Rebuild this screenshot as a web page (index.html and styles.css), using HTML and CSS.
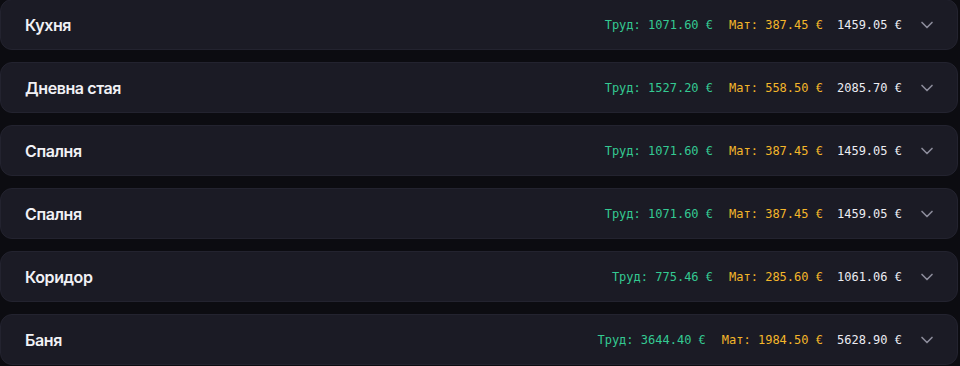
FILE: index.html
```html
<!DOCTYPE html>
<html lang="bg">
<head>
<meta charset="utf-8">
<link rel="stylesheet" href="styles.css">
</head>
<body>
<div class="list">
  <div class="room">
    <div class="room-name">Кухня</div>
    <div class="sums">
      <span class="labor">Труд: 1071.60 €</span>
      <span class="mat">Мат: 387.45 €</span>
      <span class="total">1459.05 €</span>
      <svg class="chev" viewBox="0 0 24 24"><path d="m6 9 6 6 6-6"/></svg>
    </div>
  </div>
  <div class="room">
    <div class="room-name">Дневна стая</div>
    <div class="sums">
      <span class="labor">Труд: 1527.20 €</span>
      <span class="mat">Мат: 558.50 €</span>
      <span class="total">2085.70 €</span>
      <svg class="chev" viewBox="0 0 24 24"><path d="m6 9 6 6 6-6"/></svg>
    </div>
  </div>
  <div class="room">
    <div class="room-name">Спалня</div>
    <div class="sums">
      <span class="labor">Труд: 1071.60 €</span>
      <span class="mat">Мат: 387.45 €</span>
      <span class="total">1459.05 €</span>
      <svg class="chev" viewBox="0 0 24 24"><path d="m6 9 6 6 6-6"/></svg>
    </div>
  </div>
  <div class="room">
    <div class="room-name">Спалня</div>
    <div class="sums">
      <span class="labor">Труд: 1071.60 €</span>
      <span class="mat">Мат: 387.45 €</span>
      <span class="total">1459.05 €</span>
      <svg class="chev" viewBox="0 0 24 24"><path d="m6 9 6 6 6-6"/></svg>
    </div>
  </div>
  <div class="room">
    <div class="room-name">Коридор</div>
    <div class="sums">
      <span class="labor">Труд: 775.46 €</span>
      <span class="mat">Мат: 285.60 €</span>
      <span class="total">1061.06 €</span>
      <svg class="chev" viewBox="0 0 24 24"><path d="m6 9 6 6 6-6"/></svg>
    </div>
  </div>
  <div class="room">
    <div class="room-name">Баня</div>
    <div class="sums">
      <span class="labor">Труд: 3644.40 €</span>
      <span class="mat">Мат: 1984.50 €</span>
      <span class="total">5628.90 €</span>
      <svg class="chev" viewBox="0 0 24 24"><path d="m6 9 6 6 6-6"/></svg>
    </div>
  </div>
</div>
</body>
</html>
```

FILE: styles.css
```css
html, body {
  margin: 0;
  padding: 0;
  background: #0c0c11;
}
body {
  font-family: Inter, "Noto Sans", sans-serif;
  overflow: hidden;
}
.list {
  width: 958px;
  margin-top: -1px;
  display: flex;
  flex-direction: column;
  gap: 12px;
}
.room {
  box-sizing: border-box;
  height: 51px;
  display: flex;
  align-items: center;
  justify-content: space-between;
  padding: 0 20px 0 24px;
  background: #1b1b25;
  border: 1px solid #23232f;
  border-radius: 12px;
}
.room-name {
  color: #f1f1f5;
  font-size: 16px;
  font-weight: 600;
  letter-spacing: -0.4px;
}
.sums {
  display: flex;
  align-items: center;
  gap: 16px;
  font-family: "DejaVu Sans Mono", "Liberation Mono", monospace;
  font-size: 12px;
}
.labor { color: #34c992; }
.mat { color: #f4b62a; margin-right: -2px; }
.total { color: #ececf2; }
.chev {
  width: 20px;
  height: 20px;
  margin-left: -1px;
  fill: none;
  stroke: #8b8b9a;
  stroke-width: 2;
  stroke-linecap: round;
  stroke-linejoin: round;
}
```
